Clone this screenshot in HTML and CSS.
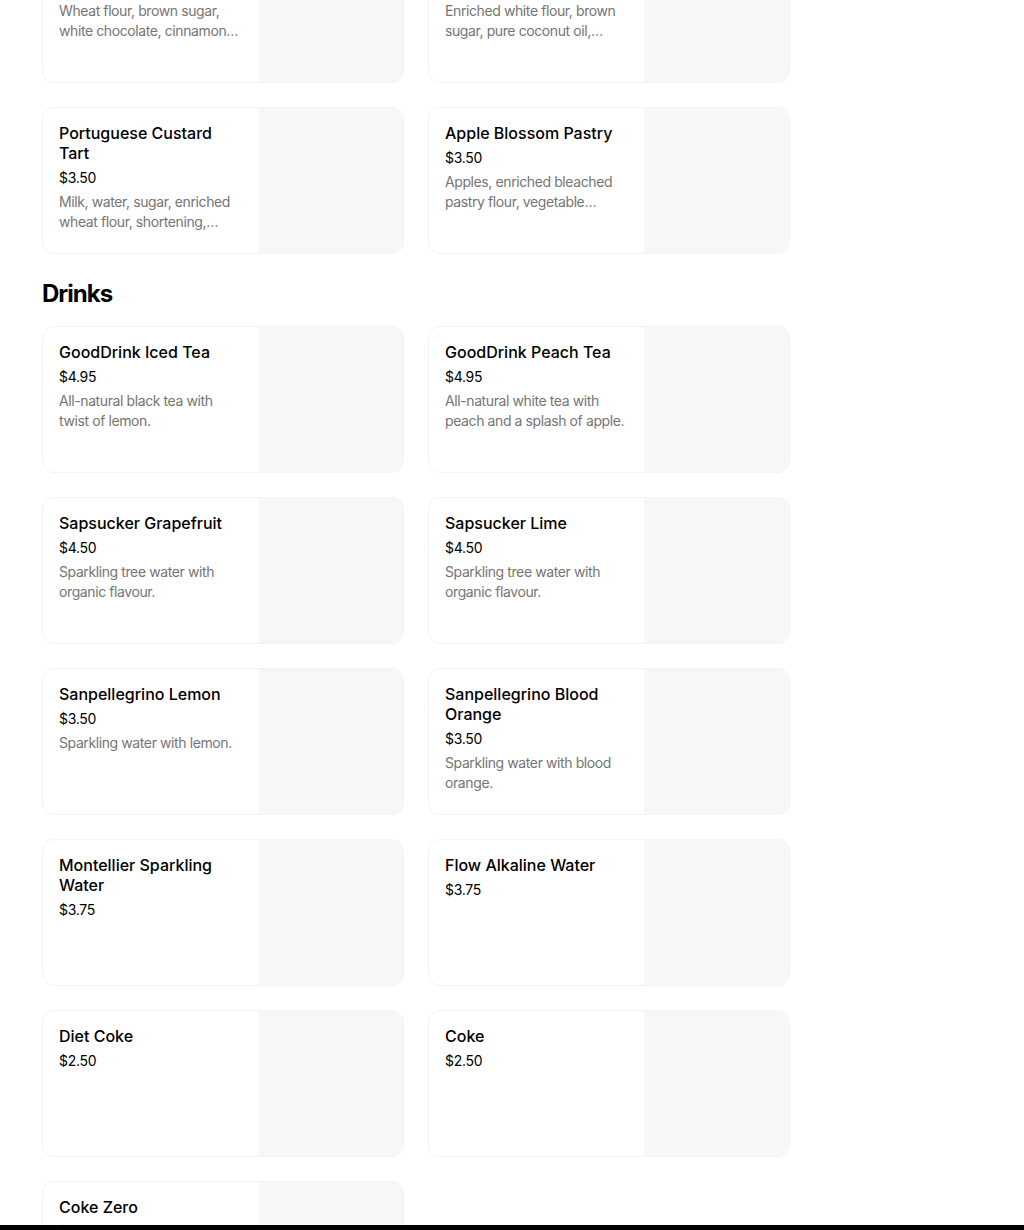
FILE: index.html
```html
<!DOCTYPE html>
<html lang="en">
<head>
  <meta charset="UTF-8">
  <meta name="viewport" content="width=device-width, initial-scale=1.0">
  <title>Menu</title>
  <link rel="stylesheet" href="styles.css">
</head>
<body>

<div class="menu">
  <section class="menu-section">
    <div class="item-list">
      <div class="item-card">
        <div class="item-info">
          <h3>Snickerdoodle Cookie</h3>
          <p class="price">$2.75</p>
          <p class="desc">Wheat flour, brown sugar, white chocolate, cinnamon, butter, eggs, vanilla.</p>
        </div>
        <div class="item-image"></div>
      </div>
      <div class="item-card">
        <div class="item-info">
          <h3>Coconut Macaroon</h3>
          <p class="price">$2.75</p>
          <p class="desc">Enriched white flour, brown sugar, pure coconut oil, shredded coconut, eggs.</p>
        </div>
        <div class="item-image"></div>
      </div>
      <div class="item-card">
        <div class="item-info">
          <h3>Portuguese Custard Tart</h3>
          <p class="price">$3.50</p>
          <p class="desc">Milk, water, sugar, enriched wheat flour, shortening, eggs, butter, cornstarch.</p>
        </div>
        <div class="item-image"></div>
      </div>
      <div class="item-card">
        <div class="item-info">
          <h3>Apple Blossom Pastry</h3>
          <p class="price">$3.50</p>
          <p class="desc">Apples, enriched bleached pastry flour, vegetable shortening, sugar, cinnamon.</p>
        </div>
        <div class="item-image"></div>
      </div>
    </div>
  </section>

  <section class="menu-section">
    <h2>Drinks</h2>
    <div class="item-list">
      <div class="item-card">
        <div class="item-info">
          <h3>GoodDrink Iced Tea</h3>
          <p class="price">$4.95</p>
          <p class="desc">All-natural black tea with twist of lemon.</p>
        </div>
        <div class="item-image"></div>
      </div>
      <div class="item-card">
        <div class="item-info">
          <h3>GoodDrink Peach Tea</h3>
          <p class="price">$4.95</p>
          <p class="desc">All-natural white tea with peach and a splash of apple.</p>
        </div>
        <div class="item-image"></div>
      </div>
      <div class="item-card">
        <div class="item-info">
          <h3>Sapsucker Grapefruit</h3>
          <p class="price">$4.50</p>
          <p class="desc">Sparkling tree water with organic flavour.</p>
        </div>
        <div class="item-image"></div>
      </div>
      <div class="item-card">
        <div class="item-info">
          <h3>Sapsucker Lime</h3>
          <p class="price">$4.50</p>
          <p class="desc">Sparkling tree water with organic flavour.</p>
        </div>
        <div class="item-image"></div>
      </div>
      <div class="item-card">
        <div class="item-info">
          <h3>Sanpellegrino Lemon</h3>
          <p class="price">$3.50</p>
          <p class="desc">Sparkling water with lemon.</p>
        </div>
        <div class="item-image"></div>
      </div>
      <div class="item-card">
        <div class="item-info">
          <h3>Sanpellegrino Blood Orange</h3>
          <p class="price">$3.50</p>
          <p class="desc">Sparkling water with blood orange.</p>
        </div>
        <div class="item-image"></div>
      </div>
      <div class="item-card">
        <div class="item-info">
          <h3>Montellier Sparkling Water</h3>
          <p class="price">$3.75</p>
        </div>
        <div class="item-image"></div>
      </div>
      <div class="item-card">
        <div class="item-info">
          <h3>Flow Alkaline Water</h3>
          <p class="price">$3.75</p>
        </div>
        <div class="item-image"></div>
      </div>
      <div class="item-card">
        <div class="item-info">
          <h3>Diet Coke</h3>
          <p class="price">$2.50</p>
        </div>
        <div class="item-image"></div>
      </div>
      <div class="item-card">
        <div class="item-info">
          <h3>Coke</h3>
          <p class="price">$2.50</p>
        </div>
        <div class="item-image"></div>
      </div>
      <div class="item-card">
        <div class="item-info">
          <h3>Coke Zero</h3>
          <p class="price">$2.50</p>
        </div>
        <div class="item-image"></div>
      </div>
    </div>
  </section>
</div>

<div class="bottom-bar"></div>

</body>
</html>
```

FILE: styles.css
```css
body {
  margin: 0;
  padding: 0;
  font-family: Inter, "Noto Sans", sans-serif;
  background-color: white;
  color: #000;
  overflow: hidden;
}

/* page is shown scrolled down a little */
.menu {
  width: 748px;
  margin-left: 42px;
  margin-top: -64px;
}

.menu-section h2 {
  font-size: 24px;
  line-height: 32px;
  font-weight: 700;
  letter-spacing: -1px;
  margin: 24px 0 16px;
}

.item-list {
  display: grid;
  grid-template-columns: 1fr 1fr;
  gap: 24px;
}

.item-card {
  display: flex;
  height: 147px;
  box-sizing: border-box;
  border: 1px solid #f3f3f3;
  border-radius: 12px;
  overflow: hidden;
  background-color: white;
}

.item-info {
  flex: 1;
  min-width: 0;
  padding: 15px 16px 16px;
}

.item-info h3 {
  margin: 0 0 5px;
  font-size: 16px;
  line-height: 20px;
  font-weight: 500;
}

.item-info .price {
  margin: 0 0 4px;
  font-size: 14px;
  line-height: 20px;
  letter-spacing: -0.3px;
}

.item-info .desc {
  margin: 0;
  font-size: 14px;
  line-height: 20px;
  color: #757575;
  letter-spacing: -0.4px;
  display: -webkit-box;
  -webkit-line-clamp: 2;
  -webkit-box-orient: vertical;
  overflow: hidden;
}

.item-image {
  width: 145px;
  flex-shrink: 0;
  background-color: #f7f7f7;
}

.bottom-bar {
  position: fixed;
  left: 0;
  right: 0;
  bottom: 0;
  height: 5px;
  background-color: #000;
}
```
